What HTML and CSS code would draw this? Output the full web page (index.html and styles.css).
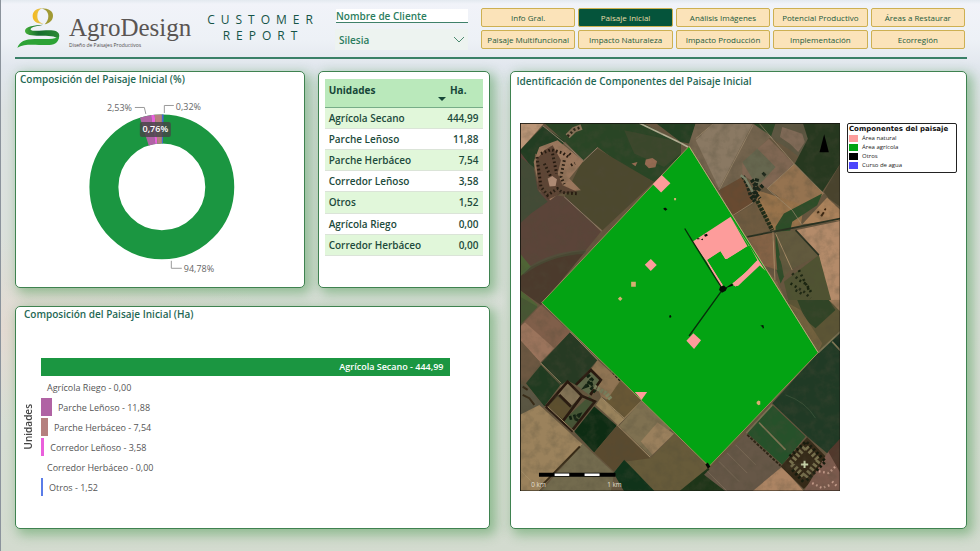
FILE: index.html
```html
<!DOCTYPE html>
<html lang="es">
<head>
<meta charset="utf-8">
<title>AgroDesign - Customer Report</title>
<link rel="stylesheet" href="styles.css">
</head>
<body>
<header class="topbar">
  <div class="brand">
    <svg class="brand-mark" viewBox="13 12 129 120" aria-hidden="true">
      <defs>
        <linearGradient id="gold" x1="0" x2="1"><stop offset="0" stop-color="#f4b81c"/><stop offset="1" stop-color="#dfc763"/></linearGradient>
        <linearGradient id="leaf" x1="0" x2="1"><stop offset="0" stop-color="#45b03a"/><stop offset=".4" stop-color="#156c2d"/><stop offset="1" stop-color="#2c8a35"/></linearGradient>
      </defs>
      <path d="M88 13C68 14 60 24 60 37C60 50 70 60 94 60C80 56 74 48 74 36C74 24 79 17 88 13Z" fill="url(#gold)"/>
      <path d="M82 13C108 12 122 22 121 36C120 50 110 58 96 61C103 54 107 46 107 36C107 24 99 15 82 13Z" fill="#a19a34"/>
      <path d="M92 62C66 64 38 66 37 80C36 93 58 95 80 95C108 95 128 95 137 105C144 92 138 80 116 79C92 78 60 84 54 77C52 68 76 66 92 62Z" fill="url(#leaf)"/>
      <path d="M14 131C22 112 36 106 66 105C96 104 118 108 139 98C138 112 130 121 110 123C80 125 38 116 14 131Z" fill="#2da336"/>
    </svg>
    <div class="brand-text">
      <span class="brand-name">AgroDesign</span>
      <span class="brand-tag">Diseño de Paisajes Productivos</span>
    </div>
  </div>
  <h1 class="report-title">CUSTOMER<br>REPORT</h1>
  <div class="client">
    <label class="client-label" for="client">Nombre de Cliente</label>
    <div class="client-field">
      <select class="client-select" id="client"><option>Silesia</option></select>
      <svg class="chevron" viewBox="0 0 12 7" aria-hidden="true"><path d="M1 1L6 6L11 1" fill="none" stroke="#4c8a70"/></svg>
    </div>
  </div>
  <nav class="tabs">
    <button class="tab">Info Gral.</button>
    <button class="tab tab-active">Paisaje Inicial</button>
    <button class="tab">Análisis Imágenes</button>
    <button class="tab">Potencial Productivo</button>
    <button class="tab">Áreas a Restaurar</button>
    <button class="tab">Paisaje Multifuncional</button>
    <button class="tab">Impacto Naturaleza</button>
    <button class="tab">Impacto Producción</button>
    <button class="tab">Implementación</button>
    <button class="tab">Ecorregión</button>
  </nav>
</header>

<main class="board">
  <div class="left">
    <div class="upper">
      <section class="card">
        <h2 class="card-title">Composición del Paisaje Inicial (%)</h2>
        <svg class="donut" viewBox="16 90 288 190" role="img" aria-label="Composición en porcentaje">
          <g fill="none" stroke-width="29" transform="rotate(-90 162 187)">
            <circle cx="162" cy="187" r="58" stroke="#1b9641"/>
            <circle cx="162" cy="187" r="58" stroke="#4a62d8" pathLength="1000" stroke-dasharray="4 996"/>
            <circle cx="162" cy="187" r="58" stroke="#b063a4" pathLength="1000" stroke-dasharray="25 975" stroke-dashoffset="-951"/>
            <circle cx="162" cy="187" r="58" stroke="#ea5fdc" pathLength="1000" stroke-dasharray="8 992" stroke-dashoffset="-976"/>
            <circle cx="162" cy="187" r="58" stroke="#b5807f" pathLength="1000" stroke-dasharray="16 984" stroke-dashoffset="-984"/>
          </g>
          <path d="M135 107.500H144.500L146 114M174 105.500H164.500V113M171.500 261V268.500H182" fill="none" stroke="#9a9a9a"/>
          <g class="donut-label">
            <text x="107" y="111">2,53%</text>
            <text x="176" y="110">0,32%</text>
            <text x="184" y="272">94,78%</text>
          </g>
          <rect x="140" y="122" width="31" height="15" rx="2" fill="#454545" fill-opacity=".82"/>
          <text class="donut-badge" x="155.500" y="132" text-anchor="middle">0,76%</text>
        </svg>
      </section>
      <section class="card card-table">
        <table class="units">
          <thead><tr><th>Unidades</th><th class="num">Ha.<span class="sort"></span></th></tr></thead>
          <tbody>
            <tr><td>Agrícola Secano</td><td class="num">444,99</td></tr>
            <tr><td>Parche Leñoso</td><td class="num">11,88</td></tr>
            <tr><td>Parche Herbáceo</td><td class="num">7,54</td></tr>
            <tr><td>Corredor Leñoso</td><td class="num">3,58</td></tr>
            <tr><td>Otros</td><td class="num">1,52</td></tr>
            <tr><td>Agrícola Riego</td><td class="num">0,00</td></tr>
            <tr><td>Corredor Herbáceo</td><td class="num">0,00</td></tr>
          </tbody>
        </table>
      </section>
    </div>
    <section class="card card-bars">
      <h2 class="card-title bars-title">Composición del Paisaje Inicial (Ha)</h2>
      <div class="bars">
        <div class="axis">Unidades</div>
        <div class="plot">
          <div class="row"><div class="bar secano" style="width:100%">Agrícola Secano - 444,99</div></div>
          <div class="row"><div class="bar" style="width:0%"></div><span>Agrícola Riego - 0,00</span></div>
          <div class="row"><div class="bar lenoso" style="width:2.67%"></div><span>Parche Leñoso - 11,88</span></div>
          <div class="row"><div class="bar herbaceo" style="width:1.69%"></div><span>Parche Herbáceo - 7,54</span></div>
          <div class="row"><div class="bar corredor" style="width:0.8%"></div><span>Corredor Leñoso - 3,58</span></div>
          <div class="row"><div class="bar" style="width:0%"></div><span>Corredor Herbáceo - 0,00</span></div>
          <div class="row"><div class="bar otros" style="width:0.34%"></div><span>Otros - 1,52</span></div>
        </div>
      </div>
    </section>
  </div>

  <section class="card card-map">
    <h2 class="card-title">Identificación de Componentes del Paisaje Inicial</h2>
    <div class="map-row">
      <svg class="map" viewBox="27 38 963 1107" role="img" aria-label="Mapa de componentes">
        <defs>
          <filter id="grain" x="0" y="0" width="100%" height="100%">
            <feTurbulence type="fractalNoise" baseFrequency=".035" numOctaves="4" seed="8"/>
            <feColorMatrix values="0 0 0 0 .08  0 0 0 0 .07  0 0 0 0 .04  1.800 0 0 0 -.72"/>
          </filter>
        </defs>
        <rect x="27" y="38" width="963" height="1107" fill="#66563f"/>
        <!-- north-west fields -->
        <path d="M27 38H100L27 120Z" fill="#bb9678"/>
        <path d="M27 120L96 48L163 92L120 150L72 130L70 175L27 140Z" fill="#223d22"/>
        <path d="M100 38H395L510 98V140L430 215L340 170L260 110L218 150L160 92Z" fill="#294525"/>
        <path d="M260 115L430 215L275 360L160 260L215 150Z" fill="#4c482e"/>
        <path d="M340 60L510 95V130L460 170L370 130Z" fill="#3a472b"/>
        <path d="M27 125L70 180L85 245L165 260L270 365L90 585L27 540Z" fill="#5b4439"/>
        <path d="M27 140L68 170L80 240L110 275L60 310L27 340Z" fill="#424b36"/>
        <path d="M27 490Q120 430 225 422L90 585L27 540Z" fill="#4b3a2c"/>
        <path d="M27 430L60 470L27 500ZM27 540L80 585L27 640Z" fill="#4f6435"/>
        <path d="M35 490Q110 430 225 425" fill="none" stroke="#46603e" stroke-width="12" opacity=".4"/>
        <path d="M85 110L140 90L218 152L175 205L210 240L150 245L118 270L85 235L68 155Z" fill="#9a775d"/>
        <path d="M75 150L100 120L125 105L150 150L140 190L155 225L200 245L150 250L112 268L82 235Z" fill="#4b3428" opacity=".75"/>
        <path d="M110 205l14-8l14 10l-4 20l-18 2z" fill="#ae8a74"/>
        <path d="M78 140l12 90l20 25l30-20l14 12l50 4M90 130l30-12l35 10l20 14M100 160l20 40M125 130l12 60M160 150l-10 50l10 22M180 165l12-6M175 130l6 6" fill="none" stroke="#24190f" stroke-width="9" stroke-dasharray="5 7"/>
        <path d="M170 78l20-20l22-8" stroke="#8c755a" stroke-width="17" fill="none"/><path d="M170 78l20-20l22-8" stroke="#2a2416" stroke-width="8" stroke-dasharray="6 7" fill="none"/>
        <path d="M405 148l20-5l14 10l-5 18l-20 3l-12-12zM362 160l18-5l-6 13z" fill="#956b52"/>
        <path d="M95 46L160 98L218 152L260 112M160 260L272 362" fill="none" stroke="#93806a" stroke-width="3"/>
        <path d="M385 38L510 98L532 110" fill="none" stroke="#b6b196" stroke-width="5"/>
        <!-- north-east fields -->
        <g transform="translate(495 0)">
          <path d="M-60 38H60L45 100L15 95Z" fill="#233f22"/>
          <path d="M60 38L280 38L285 80L205 155L200 200L130 240L38 105Z" fill="#74644e"/>
          <path d="M60 90L115 38H232L130 235Z" fill="#8a7963"/>
          <path d="M280 85L355 160L275 235L200 195L200 155Z" fill="#806753"/>
          <path d="M200 155L245 115L300 170L245 230Z" fill="#66674f"/>
          <path d="M230 38H310L290 80Z" fill="#2c4626"/>
          <path d="M300 38H390L398 85L370 140L345 120L285 82Z" fill="#5d5742"/>
          <path d="M320 50l60 20l8 25l-20 30l-25-25l-30-20z" fill="#8c705f" opacity=".75"/>
          <path d="M382 38H495V160L440 245L358 160L397 85Z" fill="#26381f"/>
          <path d="M355 162L445 250L420 275L350 290L275 235Z" fill="#957350"/>
          <path d="M130 240L200 200L235 275L170 320Z" fill="#684a31"/>
          <path d="M170 320L245 275L285 360L215 378Z" fill="#6f5b40"/>
          <path d="M245 240L385 285L375 350L290 360L245 270Z" fill="#98734b"/>
          <path d="M300 350L325 310L440 250L425 285L350 335L340 380L310 440L330 490L315 520L300 470Z" fill="#2d4d28"/>
          <path d="M380 342L455 262L495 300V330Z" fill="#ab825b"/>
          <path d="M445 245L495 160V290L460 265Z" fill="#49432d"/>
          <path d="M360 360L495 332V600H470L440 490L430 435Z" fill="#b48b6a"/>
          <path d="M300 365L360 360L430 435L345 480L325 500Z" fill="#625a3e"/>
          <path d="M215 380L295 362L305 480L260 465Z" fill="#856346"/>
          <path d="M325 515L430 435L475 600H345Z" fill="#4f5332"/>
          <path d="M265 470L305 515L345 600L330 585Z" fill="#7b6344"/>
          <path d="M232 45L130 240M115 38L60 85M285 80L355 160L445 250M355 162L275 235L350 300L380 345M250 38L290 85M235 275L165 320" fill="none" stroke="#a39072" stroke-width="2"/>
          <path d="M215 380L380 348L495 325M360 360L430 435" fill="none" stroke="#273020" stroke-width="5"/>
          <path d="M245 272L290 360" stroke="#202c18" stroke-width="13" stroke-dasharray="9 3"/>
          <path d="M202 198l12 22l12 38l12 16M228 208l14 22l-10 40M245 205l-10 40l18 20M262 225l-20 20l-4 20M262 195l8-8" fill="none" stroke="#182418" stroke-width="12" stroke-dasharray="9 4"/>
          <path d="M195 195l14 10l22 40" stroke="#7b8268" stroke-width="7" fill="none"/>
          <path d="M350 490l20 20l22 12l18 30M345 520l40 25l20 20M370 480l30 60M360 540l25 15" fill="none" stroke="#1a2410" stroke-width="8" stroke-dasharray="6 9"/>
          <path d="M425 308l6-4m6 14l8-12m2-10l4 3" stroke="#39230f" stroke-width="6"/>
          <path d="M292 365L298 510M300 370L350 480" stroke="#a58a65" stroke-width="3" fill="none"/>
        </g>
        <!-- south-west fields -->
        <g transform="translate(0 570)">
          <path d="M27 80L90 20L178 96L88 188L27 120Z" fill="#9b745c"/>
          <path d="M90 15L178 96L130 145L40 65Z" fill="#805f4a"/>
          <path d="M27 -10L80 20L27 75Z" fill="#465833"/>
          <path d="M27 120L88 188L45 250L27 240Z" fill="#6d5842"/>
          <path d="M178 96L260 180L195 255L170 242L150 255L90 190Z" fill="#263a23"/>
          <path d="M90 195L148 255L100 320L45 250Z" fill="#1f3b20"/>
          <path d="M260 180L330 245L300 305L270 290L240 210Z" fill="#8f7453"/>
          <path d="M330 240L395 300L340 355L285 305Z" fill="#685735"/>
          <path d="M27 250L55 265L100 320L27 350Z" fill="#5a5643"/>
          <path d="M27 345L85 315L213 432L80 575H27Z" fill="#9b825c"/>
          <path d="M215 432L310 520L300 575H90Z" fill="#736b4e"/>
          <path d="M170 245L215 290L160 365L105 320Z" fill="#44402a"/>
          <path d="M150 255L172 247L210 288L180 320L142 285Z" fill="#827255"/>
          <path d="M140 290L180 325L155 358L110 320Z" fill="#5d4f2e"/>
          <path d="M195 255L240 210L270 240L235 285Z" fill="#5c6748"/>
          <path d="M235 288L252 305L185 390L155 365Z" fill="#455535"/>
          <path d="M250 320L318 378L250 458L190 395Z" fill="#0d2c13"/>
          <path d="M270 293L340 358L320 375L255 315Z" fill="#9a835c"/>
          <path d="M325 378L395 300L490 370L420 470Z" fill="#7f7151"/>
          <path d="M390 425L440 368L490 402L425 465Z" fill="#9a805d"/>
          <path d="M318 378L418 475L370 520L340 480L310 515L250 458Z" fill="#5a4a2f"/>
          <path d="M418 475L500 395L595 500L520 575H430L345 485Z" fill="#675b3a"/>
          <path d="M340 480L432 575H340L308 520Z" fill="#10331a"/>
          <path d="M592 505L665 575H505Z" fill="#1d3518"/>
          <path d="M105 320L170 245L213 288L252 305L183 392L105 320M145 285L180 320M213 288L155 365M195 255L240 210L270 240L238 285" fill="none" stroke="#28190f" stroke-width="8"/>
          <path d="M230 225l12 14l-14 18l22-8M240 262l14 14M175 355l28-8l-10 20M300 205l30 35" fill="none" stroke="#102010" stroke-width="12" stroke-dasharray="8 5"/>
          <path d="M250 260l35 20l15 18" fill="none" stroke="#7f8763" stroke-width="13" stroke-dasharray="8 3"/>
          <path d="M88 188L150 250M260 180L178 96M322 378L418 472M270 292L340 355M213 432L80 575M27 510L85 570M318 378L395 300M110 320L190 395" fill="none" stroke="#a48e67" stroke-width="3"/>
          <path d="M207 440L90 560M35 285l20 10l15 20M35 260l15 10" fill="none" stroke="#382b17" stroke-width="6"/>
        </g>
        <!-- south-east fields -->
        <g transform="translate(495 570)">
          <path d="M330 0H495V95L428 158Z" fill="#5c5535"/>
          <path d="M365 0H460L480 30L420 85L390 60Z" fill="#304426"/>
          <path d="M460 0H495V35Z" fill="#9b7958"/>
          <path d="M340 10L428 158L440 130L375 30Z" fill="#72613e"/>
          <path d="M428 158L495 95V420L455 460L395 410L290 310Z" fill="#203a25"/>
          <path d="M470 125L495 95V160Z" fill="#1a3020"/>
          <path d="M290 315L390 410L320 495L215 400Z" fill="#26512a"/>
          <path d="M212 400L320 500L240 575H150L85 525Z" fill="#665747"/>
          <path d="M320 500L385 575H230Z" fill="#ac8463"/>
          <path d="M395 412L465 485L385 568L315 500Z" fill="#342917"/>
          <path d="M455 460L495 420V575H385Z" fill="#7d5b4e"/>
          <path d="M458 455L495 415V520Z" fill="#51382c"/>
          <path d="M345 490l45-50l40 42l-42 50z" fill="none" stroke="#77704d" stroke-width="15" stroke-dasharray="8 6"/>
          <path d="M376 494h22m-11-11v22" stroke="#c3cfa6" stroke-width="6"/>
          <path d="M342 470l50-45l58 60l-60 60M350 510l35 38" fill="none" stroke="#151a0c" stroke-width="9" stroke-dasharray="7 7"/>
          <path d="M250 368L330 450M290 315L212 400M428 158L495 95M470 125L495 152" fill="none" stroke="#7e7554" stroke-width="5"/>
          <path d="M215 405L315 498" stroke="#2c2515" stroke-width="6" stroke-dasharray="9 4"/>
          <path d="M430 515l30 5l20-20M410 550l30 15l25-10M470 545l15 15" fill="none" stroke="#c29a89" stroke-width="7" stroke-dasharray="5 8"/>
          <path d="M95 515L155 575M130 485l60 60M155 460l60 60M180 435l60 60" fill="none" stroke="#83735e" stroke-width="2"/>
          <path d="M330 285q60 20 90 70" stroke="#425a40" stroke-width="2" fill="none"/>
        </g>
        <rect x="27" y="38" width="963" height="1107" filter="url(#grain)" opacity=".35"/>
        <!-- farmed area and its components -->
        <path d="M535 108L923 728L595 1070L92 578Z" fill="#03a313" stroke="#9b8b59" stroke-width="3"/>
        <g fill="#fd9c9b">
          <path d="M545 395L660 320L738 457L716 405L650 447H643L629 424L590 450L637 525L630 532L588 455Z"/>
          <path d="M660 320L765 483L738 457L675 530L665 520L738 457L712 403Z"/>
          <path d="M453 194L479 219L451 247L426 222Z"/>
          <path d="M420 447L438 465L420 483L402 464Z"/>
          <path d="M548 670L571 691L550 717L527 692Z"/>
          <path d="M372 846H409L392 870Z"/>
        </g>
        <path d="M716 405L740 450L735 462L670 515L637 525L590 450L629 424L643 447H650Z" fill="#03a313"/>
        <path d="M738 452L752 462L682 528L667 526Z" fill="#fd9c9b"/>
        <g fill="#d7ae73"><path d="M361 515h14v15h-14zM328 559l7 7l-7 7l-7-7zM490 263l6 0v7h-6zM743 872l6 2v10l-6 2l-5-5v-5z"/></g>
        <path d="M522 355L545 393L634 535M636 538L535 678" fill="none" stroke="#062f0a" stroke-width="4"/>
        <path d="M628 531l12-5l6 6l18-12l4 6l-18 6l-5 10l-11 6l-9-8zM457 296l6-4l7 5l-6 5zM475 617l5-2l2 6l-5 3zM749 647l9-2l2 8l-3 3l-2-6zM584 1064l7-6l8 12l-7 7zM570 388l6-3l1 5zM580 374l9-3l2 6l-8 3zM559 384h7v3h-7z" fill="#050d05"/>
        <path d="M535 108L923 728" stroke="#bdb986" stroke-width="2"/>
        <path d="M941 72L955 126H927Z" fill="#000"/>
        <path d="M84 1089H314V1101H84Z" fill="#000"/>
        <path d="M131 1091H175V1099H131ZM221 1091H266V1099H221Z" fill="#fff"/>
        <g class="scale-label"><text x="61" y="1133">0 km</text><text x="289" y="1133">1 km</text></g>
        <rect x="28" y="39" width="961" height="1105" fill="none" stroke="#15150f" stroke-width="3"/>
      </svg>
      <div class="legend">
        <h3 class="legend-title">Componentes del paisaje</h3>
        <ul class="legend-list">
          <li><i class="swatch natural"></i>Área natural</li>
          <li><i class="swatch agricola"></i>Área agrícola</li>
          <li><i class="swatch other"></i>Otros</li>
          <li><i class="swatch water"></i>Curso de agua</li>
        </ul>
      </div>
    </div>
  </section>
</main>
</body>
</html>
```
FILE: styles.css
```css
* { box-sizing: border-box; }

body {
  margin: 0;
  min-height: 100vh;
  display: flex;
  flex-direction: column;
  font-family: "Open Sans", "Noto Sans", sans-serif;
  color: #1d4b3c;
  border-left: 1px solid #8b939c;
  background:
    radial-gradient(ellipse at 0 60%, rgba(232, 216, 208, .7), transparent 20%),
    linear-gradient(#e3e9ef 0, #f1f3f9 4px, #edf1f6 40px, #e2e7ee 66px, #dde2e2 110px, #d9dfd7 60%, #d3dbcf);
}

.topbar {
  display: flex;
  align-items: flex-start;
  height: 59px;
  margin: 0 13px 0 14px;
  padding-top: 8px;
  border-bottom: 2px solid #3a8068;
}

.brand { display: flex; gap: 9px; padding-left: 2px; width: 188px; }
.brand-mark { width: 43px; height: 40px; }
.brand-text { display: flex; flex-direction: column; padding-top: 6px; }
.brand-name { font: 25px/28px "Liberation Serif", serif; color: #5a5553; white-space: nowrap; }
.brand-tag { font-size: 5px; line-height: 6px; color: #4f4b4a; white-space: nowrap; }

.report-title {
  margin: 4px 0 0;
  width: 120px;
  font-size: 12px;
  line-height: 16px;
  font-weight: 400;
  letter-spacing: 6px;
  text-align: center;
  color: #155447;
}

.client { width: 133px; margin: 1px 0 0 12px; }
.client-label {
  display: block;
  margin-left: 1px;
  height: 14px;
  font-size: 10px;
  line-height: 14px;
  font-weight: 600;
  color: #2b7d5d;
  background: #fff;
  border-bottom: 1px solid #3f806a;
}
.client-field { position: relative; margin-top: 6px; }
.client-select {
  display: block;
  appearance: none;
  width: 100%;
  height: 21px;
  padding: 0 4px;
  border: 0;
  background: #edf3f0;
  font: 600 10px "Open Sans", sans-serif;
  color: #2b7d5d;
}
.chevron { position: absolute; right: 3px; top: 7px; width: 12px; height: 7px; pointer-events: none; }

.tabs {
  flex: 1;
  display: grid;
  grid-template-columns: repeat(5, 1fr);
  gap: 3px;
  margin: 0 2px 0 13px;
}
.tab {
  height: 19px;
  padding: 0;
  border: 1px solid #cdb052;
  border-radius: 2px;
  background: #fbe3b9;
  font: 8px "Open Sans", sans-serif;
  color: #1d5a3c;
  white-space: nowrap;
}
.tab-active { background: #05543b; color: #e8dda8; }

.board {
  flex: 1;
  display: grid;
  grid-template-columns: 474fr 457fr;
  gap: 20px;
  padding: 12px 13px 22px 14px;
}
.left { display: grid; grid-template-rows: 217fr 223fr; gap: 18px; }
.upper { display: grid; grid-template-columns: 290fr 172fr; gap: 13px; }
.card {
  background: #fff;
  border: 1px solid #3f8250;
  border-radius: 5px;
  box-shadow: 4px 4px 12px 2px rgba(70, 150, 75, .48);
  min-width: 0;
}
.card-title {
  margin: 0;
  padding: 0 4px;
  font-size: 10px;
  line-height: 15px;
  font-weight: 600;
  color: #1f6854;
}

.donut { display: block; width: 100%; margin-top: 3px; }
.donut-label { font-size: 9px; fill: #666; }
.donut-badge { font-size: 9px; font-weight: 600; fill: #fff; }

.card-table { padding: 7px 6px; }
.units { width: 100%; height: 177px; border-collapse: collapse; font-size: 10px; line-height: 14px; font-weight: 600; }
.units th { height: 28px; padding: 0 4px 5px; text-align: left; font-weight: 700; background: #bae9bb; border-bottom: 1px solid #77ad88; color: #164638; }
.units td { padding: 0 4px; border-bottom: 1px solid #dbe4d8; }
.units tbody tr:nth-child(odd) { background: #e1f7da; }
.units .num { text-align: right; }
.units th.num { position: relative; padding-right: 16px; }
.sort { position: absolute; left: 0; bottom: 6px; border: 4px solid transparent; border-top-color: #164638; border-bottom: 0; }

.bars-title { padding: 0 8px; }
.bars { display: flex; align-items: center; margin: 36px 39px 0 6px; }
.axis { writing-mode: vertical-rl; transform: rotate(180deg); font-size: 10px; line-height: 12px; font-weight: 600; color: #444; }
.plot { flex: 1; margin-left: 7px; display: grid; gap: 2px; }
.row { display: flex; align-items: center; height: 18px; font-size: 9px; font-weight: 500; color: #555; white-space: nowrap; }
.row span { padding-left: 6px; }
.bar { height: 18px; flex: none; }
.secano { background: #1b9641; color: #fff; font-weight: 600; line-height: 18px; text-align: right; padding-right: 6px; }
.lenoso { background: #b063a4; }
.herbaceo { background: #b5807f; }
.corredor { background: #ea5fdc; }
.otros { min-width: 2px; background: #5a7ce8; }

.card-map .card-title { padding: 2px 6px 0; }
.map-row { display: flex; align-items: flex-start; gap: 7px; margin: 34px 9px 0; }
.map { flex: 1; min-width: 0; }
.scale-label { font: 19px "Open Sans", sans-serif; fill: #e5e0d4; }
.legend { width: 110px; border: 1px solid #222; border-radius: 2px; padding: 1px; }
.legend-title { margin: 0; font: 700 7px/9px "DejaVu Sans", sans-serif; color: #111; white-space: nowrap; }
.legend-list { margin: 0; padding: 0 0 1px; list-style: none; font-size: 6px; line-height: 9px; color: #222; }
.legend-list li { display: flex; align-items: center; gap: 4px; }
.swatch { width: 9px; height: 7px; }
.natural { background: #fd9c9b; }
.agricola { background: #03a313; }
.other { background: #000; }
.water { background: #4c46fb; }
```
